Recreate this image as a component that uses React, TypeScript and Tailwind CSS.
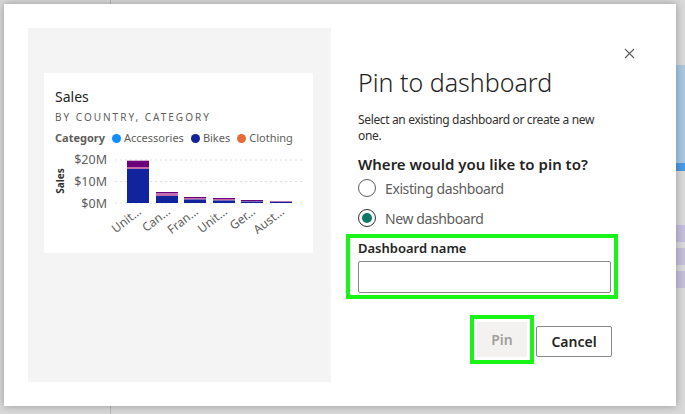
import React from "react";

const font = { fontFamily: '"Noto Sans", "Open Sans", sans-serif' };

type Bar = { x: number; top: number; pink: number; blue: number };

// Stacked column segments in plot coordinates (baseline at y=51)
const bars: Bar[] = [
  { x: 83, top: 8.7, pink: 15, blue: 17 },
  { x: 112, top: 40, pink: 41.5, blue: 44 },
  { x: 140, top: 45, pink: 46, blue: 47.5 },
  { x: 169, top: 46, pink: 47, blue: 48.5 },
  { x: 197, top: 48, pink: 49, blue: 49.5 },
  { x: 226, top: 49, pink: 49.5, blue: 50 },
];

const labels = ["Unit...", "Can...", "Fran...", "Unit...", "Ger...", "Aust..."];

function Chart() {
  return (
    <svg width="269" height="102" className="block" style={font}>
      {[8, 29.5, 51].map((y) => (
        <line key={y} x1="71" x2="258" y1={y} y2={y} stroke="#dedede" strokeWidth="1" strokeDasharray="2 3" />
      ))}
      <text x="63" y="12" textAnchor="end" fontSize="12.5" fill="#605e5c">$20M</text>
      <text x="63" y="34" textAnchor="end" fontSize="12.5" fill="#605e5c">$10M</text>
      <text x="63" y="55.5" textAnchor="end" fontSize="12.5" fill="#605e5c">$0M</text>
      <text
        x="0"
        y="0"
        fontSize="10"
        fontWeight="700"
        fill="#323130"
        textAnchor="middle"
        transform="translate(19.5 29) rotate(-90)"
      >
        Sales
      </text>
      {bars.map((b, i) => (
        <g key={i}>
          <rect x={b.x} y={b.top} width="22" height={b.pink - b.top} fill="#6b007b" />
          <rect x={b.x} y={b.pink} width="22" height={b.blue - b.pink} fill="#c46aa8" />
          <rect x={b.x} y={b.blue} width="22" height={51 - b.blue} fill="#12239e" />
        </g>
      ))}
      {labels.map((l, i) => (
        <text
          key={i}
          x="0"
          y="0"
          fontSize="12"
          fill="#605e5c"
          textAnchor="end"
          transform={`translate(${bars[i].x + 15} 61) rotate(-38)`}
        >
          {l}
        </text>
      ))}
    </svg>
  );
}

function Radio({ checked, label }: { checked?: boolean; label: string }) {
  return (
    <div className="flex items-center h-[20px]">
      <span
        className={
          "w-[18px] h-[18px] rounded-full border flex items-center justify-center " +
          (checked ? "border-[#323130]" : "border-[#605e5c]")
        }
      >
        {checked && <span className="w-[10px] h-[10px] rounded-full bg-[#117865]" />}
      </span>
      <span className="ml-[9px] text-[14px] tracking-[-0.4px] text-[#605e5c]">{label}</span>
    </div>
  );
}

export default function App() {
  return (
    <div className="relative w-[685px] h-[414px] overflow-hidden bg-[#d9d9d9]" style={font}>
      {/* report page dimmed behind the dialog */}
      <div className="absolute left-[110px] top-0 w-px h-full bg-[#b8b8b8]" />
      <div className="absolute right-0 top-[65px] w-[9px] h-[100px] bg-[#a7c8e2]" />
      <div className="absolute right-0 top-[163px] w-[9px] h-[8px] bg-[#4b9be0]" />
      <div className="absolute right-0 top-[225px] w-[9px] h-[17px] bg-[#c5bedb]" />
      <div className="absolute right-0 top-[248px] w-[9px] h-[17px] bg-[#c5bedb]" />
      <div className="absolute right-0 top-[271px] w-[9px] h-[17px] bg-[#c5bedb]" />

      <div className="absolute left-[4px] top-[4px] w-[672px] h-[402px] bg-white shadow-[0_0_8px_rgba(0,0,0,0.3)] flex p-6">
        {/* preview of the tile being pinned */}
        <div className="w-[303px] h-[354px] bg-[#f4f4f4] pt-[45px] pl-4 shrink-0">
          <div className="w-[269px] h-[180px] bg-white">
            <div className="pl-[11px] pt-[14px]">
              <div className="text-[14px] leading-[20px] text-[#252423]">Sales</div>
              <div className="text-[10px] leading-[14px] mt-[3px] tracking-[2px] text-[#605e5c]">
                BY COUNTRY, CATEGORY
              </div>
              <div className="flex items-center mt-[6px] text-[11px] leading-[16px] text-[#605e5c]">
                <span className="font-bold text-[#605e5c] mr-[7px]">Category</span>
                <span className="w-[9px] h-[9px] rounded-full bg-[#118dff] mr-[3px]" />
                <span className="mr-[7px]">Accessories</span>
                <span className="w-[9px] h-[9px] rounded-full bg-[#12239e] mr-[3px]" />
                <span className="mr-[7px]">Bikes</span>
                <span className="w-[9px] h-[9px] rounded-full bg-[#e66c37] mr-[3px]" />
                <span>Clothing</span>
              </div>
            </div>
            <div className="mt-[6px]">
              <Chart />
            </div>
          </div>
        </div>

        {/* form column */}
        <div className="relative flex-1 pl-[27px]">
          <button className="absolute right-[15px] top-[17px] w-[16px] h-[16px] flex items-center justify-center text-[#605e5c]">
            <svg width="11" height="11" viewBox="0 0 11 11">
              <path d="M1 1 L10 10 M10 1 L1 10" stroke="#605e5c" strokeWidth="1.1" />
            </svg>
          </button>
          <h1 className="mt-[37px] text-[25px] leading-[34px] font-light text-[#252423]">Pin to dashboard</h1>
          <p className="mt-[13px] w-[253px] text-[12px] leading-[16px] tracking-[-0.35px] text-[#323130]">
            Select an existing dashboard or create a new one.
          </p>
          <h2 className="mt-[10px] text-[15px] leading-[20px] font-semibold text-[#252423]">
            Where would you like to pin to?
          </h2>
          <div className="mt-[4px] flex flex-col gap-[10px]">
            <Radio label="Existing dashboard" />
            <Radio checked label="New dashboard" />
          </div>
          <div className="mt-[6px] -ml-[12px] w-[272px] border-[4px] border-[#16f516] pl-[8px] pr-[4px] pt-[1px] pb-[2px]">
            <div className="text-[13px] leading-[18px] font-semibold text-[#252423]">Dashboard name</div>
            <div className="mt-[4px] w-[253px] h-[32px] rounded-[2px] border border-[#8a8886] bg-white" />
          </div>
          <div className="mt-[16px] flex items-start">
            <div className="ml-[112px] border-[4px] border-[#16f516] p-[3px]">
              <div className="w-[50px] h-[35px] bg-[#f3f2f1] flex items-center justify-center text-[14px] font-semibold text-[#a19f9d]">
                Pin
              </div>
            </div>
            <div className="mt-[11px] ml-[2px] w-[76px] h-[31px] rounded-[2px] border border-[#8a8886] flex items-center justify-center text-[14px] font-semibold text-[#252423]">
              Cancel
            </div>
          </div>
        </div>
      </div>
    </div>
  );
}
